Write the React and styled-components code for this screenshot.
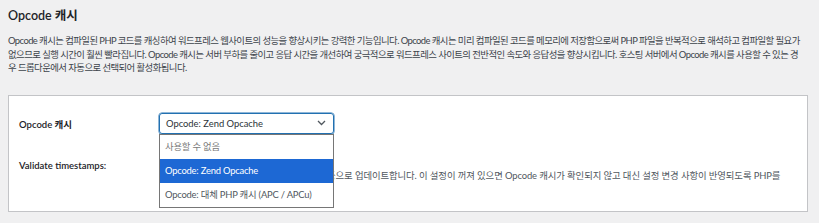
import React from "react"
import styled, { createGlobalStyle } from "styled-components"

const GlobalStyle = createGlobalStyle`
  html, body {
    margin: 0;
    padding: 0;
    background: #f0f0f1;
  }
  body {
    font-family: Lato, "Noto Sans CJK KR", sans-serif;
    color: #3c434a;
    font-size: 9.5px;
  }
  * {
    box-sizing: border-box;
  }
`

const Page = styled.div`
  padding: 6px 11px 0 8px;
  width: 819px;
  height: 223px;
  overflow: hidden;
`

const Heading = styled.h2`
  margin: 0;
  font-size: 12.5px;
  font-weight: 600;
  line-height: 20px;
  color: #1d2327;
`

const Intro = styled.p`
  margin: 8px 0 0;
  font-size: 9.4px;
  line-height: 13.5px;
  letter-spacing: -0.55px;

  span {
    display: block;
    white-space: nowrap;
  }
`

const Panel = styled.div`
  margin-top: 20px;
  background: #fff;
  border: 1px solid #c3c4c7;
  height: 117px;
  padding: 17px 10px 0;
`

const Row = styled.div`
  display: grid;
  grid-template-columns: 140px 1fr;
  align-items: ${p => (p.top ? "start" : "center")};
  margin-bottom: ${p => p.gap || 0}px;
`

const Label = styled.div`
  font-size: 9.5px;
  font-weight: 600;
  color: #1d2327;
  padding-top: ${p => p.offset || 0}px;
`

const SelectWrap = styled.div`
  position: relative;
  width: 175px;
`

const SelectBox = styled.div`
  height: 21px;
  border: 1px solid #2271b1;
  border-radius: 3px;
  box-shadow: 0 0 0 0.5px #2271b1;
  display: flex;
  align-items: center;
  justify-content: space-between;
  padding: 0 7px 0 6px;
  font-size: 9.4px;
  color: #2c3338;
`

const Menu = styled.ul`
  position: absolute;
  top: 21px;
  left: 0;
  width: 175px;
  margin: 0;
  padding: 0;
  list-style: none;
  background: #fff;
  border: 1px solid #767676;
  z-index: 2;
`

const Option = styled.li`
  height: 24px;
  line-height: 24px;
  padding-left: 5px;
  font-size: 9.4px;
  letter-spacing: -0.2px;
  background: ${p => (p.active ? "#1d68d4" : "transparent")};
  color: ${p => (p.active ? "#fff" : p.disabled ? "#7a7a7a" : "#50575e")};
  white-space: nowrap;
`

const Field = styled.div`
  display: flex;
  flex-direction: column;
`

const Check = styled.span`
  width: 11px;
  height: 11px;
  border: 1px solid #8c8f94;
  border-radius: 3px;
`

const Description = styled.p`
  margin: 0;
  font-size: 9.4px;
  line-height: 14px;
  letter-spacing: -0.1px;
  color: #50575e;

  span {
    display: block;
    white-space: nowrap;
  }
`

const Chevron = () => (
  <svg width="9" height="6" viewBox="0 0 9 6" fill="none">
    <path d="M1 1l3.5 3.5L8 1" stroke="#50575e" strokeWidth="1.3" />
  </svg>
)

export default function App() {
  return (
    <Page>
      <GlobalStyle />
      <Heading>Opcode 캐시</Heading>
      <Intro>
        <span>
          Opcode 캐시는 컴파일된 PHP 코드를 캐싱하여 워드프레스 웹사이트의 성능을 향상시키는 강력한 기능입니다. Opcode 캐시는 미리 컴파일된 코드를 메모리에 저장함으로써 PHP 파일을 반복적으로 해석하고 컴파일할 필요가
        </span>
        <span>
          없으므로 실행 시간이 훨씬 빨라집니다. Opcode 캐시는 서버 부하를 줄이고 응답 시간을 개선하여 궁극적으로 워드프레스 사이트의 전반적인 속도와 응답성을 향상시킵니다. 호스팅 서버에서 Opcode 캐시를 사용할 수 있는 경
        </span>
        <span>우 드롭다운에서 자동으로 선택되어 활성화됩니다.</span>
      </Intro>
      <Panel>
        <Row gap={24}>
          <Label offset={2}>Opcode 캐시</Label>
          <SelectWrap>
            <SelectBox>
              <span>Opcode: Zend Opcache</span>
              <Chevron />
            </SelectBox>
            <Menu>
              <Option disabled>사용할 수 없음</Option>
              <Option active>Opcode: Zend Opcache</Option>
              <Option>Opcode: 대체 PHP 캐시 (APC / APCu)</Option>
            </Menu>
          </SelectWrap>
        </Row>
        <Row top>
          <Label offset={2}>Validate timestamps:</Label>
          <Field>
            <Check />
            <Description>
              <span>PHP 파일의 변경 여부를 확인하여 캐시를 자동으로 업데이트합니다. 이 설정이 꺼져 있으면 Opcode 캐시가 확인되지 않고 대신 설정 변경 사항이 반영되도록 PHP를</span>
              <span>다시 시작해야 합니다.</span>
            </Description>
          </Field>
        </Row>
      </Panel>
    </Page>
  )
}
